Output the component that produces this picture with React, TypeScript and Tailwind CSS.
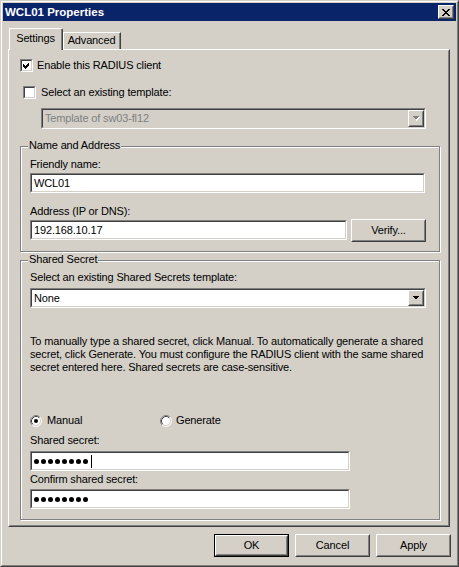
import React from "react";

// Classic Windows 3D edge helpers
const sunkenOuter =
  "border border-t-[#808080] border-l-[#808080] border-b-white border-r-white";
const sunkenInner =
  "border border-t-[#404040] border-l-[#404040] border-b-[#d4d0c8] border-r-[#d4d0c8]";
const raisedOuter =
  "border border-t-white border-l-white border-b-[#404040] border-r-[#404040]";
const raisedInner =
  "border border-t-[#d4d0c8] border-l-[#d4d0c8] border-b-[#808080] border-r-[#808080]";
const etched = "border border-[#808080] shadow-[inset_1px_1px_0_#fff,1px_1px_0_#fff]";

function Checkbox({ checked }: { checked?: boolean }) {
  return (
    <div className={`w-[13px] h-[13px] shrink-0 ${sunkenOuter}`}>
      <div className={`w-full h-full bg-white flex items-center justify-center ${sunkenInner}`}>
        {checked && (
          <svg width="9" height="9" viewBox="0 0 9 9" shapeRendering="crispEdges">
            <path d="M1 3 L3 5 L7 1 L7 4 L3 8 L1 6 Z" fill="#000" />
          </svg>
        )}
      </div>
    </div>
  );
}

function Radio({ checked }: { checked?: boolean }) {
  return (
    <svg width="12" height="12" viewBox="0 0 12 12" className="shrink-0">
      <circle cx="6" cy="6" r="5" fill="#fff" />
      <path d="M2.11 9.89 A5.5 5.5 0 0 1 9.89 2.11" fill="none" stroke="#808080" strokeWidth="1" />
      <path d="M9.89 2.11 A5.5 5.5 0 0 1 2.11 9.89" fill="none" stroke="#ffffff" strokeWidth="1" />
      <path d="M2.82 9.18 A4.5 4.5 0 0 1 9.18 2.82" fill="none" stroke="#404040" strokeWidth="1" />
      <path d="M9.18 2.82 A4.5 4.5 0 0 1 2.82 9.18" fill="none" stroke="#d4d0c8" strokeWidth="1" />
      {checked && <circle cx="6" cy="6" r="2" fill="#000" />}
    </svg>
  );
}

function Button({
  label,
  width,
  isDefault,
}: {
  label: string;
  width: string;
  isDefault?: boolean;
}) {
  return (
    <div className={`${width} h-[23px] shrink-0 ${isDefault ? "border border-black" : ""}`}>
      <div className={`h-full ${raisedOuter}`}>
        <div className={`h-full flex items-center justify-center ${raisedInner}`}>{label}</div>
      </div>
    </div>
  );
}

function Arrow({ disabled }: { disabled?: boolean }) {
  return (
    <svg width="8" height="5" viewBox="0 0 8 5" shapeRendering="crispEdges">
      {disabled && <path d="M1.5 1 L8 1 L4.75 5 Z" fill="#fff" />}
      <path d="M0.5 0 L7.5 0 L4 4 Z" fill={disabled ? "#808080" : "#000"} />
    </svg>
  );
}

function DropButton({ disabled }: { disabled?: boolean }) {
  return (
    <div className={`w-[16px] h-full shrink-0 ${raisedOuter}`}>
      <div className={`h-full flex items-center justify-center bg-[#d4d0c8] ${raisedInner}`}>
        <Arrow disabled={disabled} />
      </div>
    </div>
  );
}

function TextField({ value, width }: { value: React.ReactNode; width: string }) {
  return (
    <div className={`${width} h-[20px] shrink-0 ${sunkenOuter}`}>
      <div className={`h-full bg-white flex items-center pl-[1px] ${sunkenInner}`}>{value}</div>
    </div>
  );
}

function Dots({ count, caret }: { count: number; caret?: boolean }) {
  return (
    <div className="flex items-center gap-[2px] pl-[1px]">
      {Array.from({ length: count }).map((_, i) => (
        <span key={i} className="w-[5px] h-[5px] rounded-full bg-black" />
      ))}
      {caret && <span className="w-[1px] h-[13px] bg-black ml-[1px]" />}
    </div>
  );
}

function Group({
  title,
  className,
  children,
}: {
  title: string;
  className: string;
  children: React.ReactNode;
}) {
  return (
    <div className={`relative ${etched} ${className}`}>
      <span className="absolute left-[7px] -top-[8px] px-[1px] bg-[#d4d0c8] leading-[13px]">
        {title}
      </span>
      {children}
    </div>
  );
}

export default function App() {
  return (
    <div className="w-[459px] h-[567px] bg-[#d4d0c8] text-black text-[11px] leading-[13px] tracking-[-0.15px] font-['Liberation_Sans',Arial,sans-serif] border border-t-[#d4d0c8] border-l-[#d4d0c8] border-b-[#404040] border-r-[#404040]">
      <div className="h-full flex flex-col p-[1px] border border-t-white border-l-white border-b-[#808080] border-r-[#808080]">
        {/* Caption */}
        <div className="h-[18px] shrink-0 bg-[#0a246a] flex items-center justify-between pl-[2px] pr-[2px]">
          <span className="text-white font-bold text-[11.5px] tracking-normal">WCL01 Properties</span>
          <div className={`w-[16px] h-[14px] ${raisedOuter}`}>
            <div className={`h-full flex items-center justify-center bg-[#d4d0c8] ${raisedInner}`}>
              <svg width="8" height="7" viewBox="0 0 8 7" shapeRendering="crispEdges">
                <path
                  d="M0 0 L2 0 L4 2.5 L6 0 L8 0 L5 3.5 L8 7 L6 7 L4 4.5 L2 7 L0 7 L3 3.5 Z"
                  fill="#000"
                />
              </svg>
            </div>
          </div>
        </div>

        {/* Body */}
        <div className="flex-1 flex flex-col pl-[5px] pr-[6px] pt-[7px]">
          {/* Tab strip */}
          <div className="h-[21px] flex items-end pl-[1px]">
            <div className="relative z-10 -mb-[1px] w-[54px] h-[22px] bg-[#d4d0c8] border-t border-l border-r border-t-white border-l-white border-r-[#404040] rounded-tr-[2px]">
              <div className="h-full flex items-center justify-center pb-[2px] border-r border-r-[#808080]">
                Settings
              </div>
            </div>
            <div className="w-[58px] h-[17px] border-t border-l border-r border-t-white border-l-white border-r-[#404040]">
              <div className="h-full flex items-center justify-center pb-[1px] border-r border-r-[#808080]">
                Advanced
              </div>
            </div>
          </div>

          {/* Tab page */}
          <div className="h-[478px] border border-t-white border-l-white border-b-[#404040] border-r-[#404040]">
            <div className="h-full flex flex-col border border-t-[#d4d0c8] border-l-[#d4d0c8] border-b-[#808080] border-r-[#808080]">
              <div className="mt-[8px] ml-[10px] h-[13px] flex items-center gap-[4px]">
                <Checkbox checked />
                <span>Enable this RADIUS client</span>
              </div>

              <div className="mt-[14px] ml-[13px] h-[13px] flex items-center gap-[5px]">
                <Checkbox />
                <span>Select an existing template:</span>
              </div>

              <div className={`mt-[9px] ml-[31px] w-[385px] h-[21px] ${sunkenOuter}`}>
                <div className={`h-full flex items-center bg-[#d4d0c8] ${sunkenInner}`}>
                  <span className="flex-1 pl-[2px] text-[#808080]">Template of sw03-fl12</span>
                  <DropButton disabled />
                </div>
              </div>

              <Group
                title="Name and Address"
                className="mt-[17px] ml-[10px] w-[420px] pt-[11px] pl-[9px] pb-[9px]"
              >
                <div>Friendly name:</div>
                <div className="mt-[2px]">
                  <TextField width="w-[395px]" value={<span className="pl-[1px]">WCL01</span>} />
                </div>
                <div className="mt-[12px]">Address (IP or DNS):</div>
                <div className="h-[24px] flex items-center gap-[4px]">
                  <TextField width="w-[317px]" value={<span className="pl-[1px]">192.168.10.17</span>} />
                  <Button label="Verify..." width="w-[75px]" />
                </div>
              </Group>

              <Group
                title="Shared Secret"
                className="mt-[8px] ml-[10px] w-[420px] pt-[10px] pl-[9px] pb-[10px]"
              >
                <div>Select an existing Shared Secrets template:</div>
                <div className={`mt-[4px] w-[396px] h-[20px] ${sunkenOuter}`}>
                  <div className={`h-full flex items-center bg-white ${sunkenInner}`}>
                    <span className="flex-1 pl-[2px]">None</span>
                    <DropButton />
                  </div>
                </div>

                <p className="mt-[27px] whitespace-nowrap">
                  To manually type a shared secret, click Manual. To automatically generate a shared
                  <br />
                  secret, click Generate. You must configure the RADIUS client with the same shared
                  <br />
                  secret entered here. Shared secrets are case-sensitive.
                </p>

                <div className="mt-[40px] h-[13px] flex items-center">
                  <div className="w-[130px] flex items-center gap-[5px]">
                    <Radio checked />
                    <span>Manual</span>
                  </div>
                  <div className="flex items-center gap-[4px]">
                    <Radio />
                    <span>Generate</span>
                  </div>
                </div>

                <div className="mt-[7px]">Shared secret:</div>
                <div className="mt-[4px]">
                  <TextField width="w-[320px]" value={<Dots count={8} caret />} />
                </div>
                <div className="mt-[2px]">Confirm shared secret:</div>
                <div className="mt-[3px]">
                  <TextField width="w-[320px]" value={<Dots count={8} />} />
                </div>
              </Group>
            </div>
          </div>

          {/* Dialog buttons */}
          <div className="mt-[7px] -mr-[1px] flex justify-end gap-[6px]">
            <Button label="OK" width="w-[75px]" isDefault />
            <Button label="Cancel" width="w-[75px]" />
            <Button label="Apply" width="w-[75px]" />
          </div>
        </div>
      </div>
    </div>
  );
}
